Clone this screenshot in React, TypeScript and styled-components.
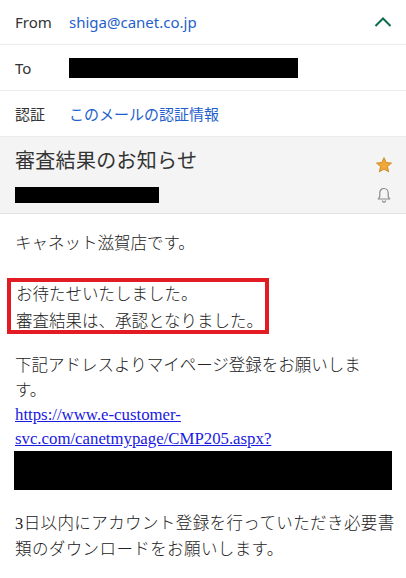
import styled, { createGlobalStyle } from "styled-components";

const GlobalStyle = createGlobalStyle`
  html, body {
    margin: 0;
    padding: 0;
    background: #ffffff;
  }
  body {
    font-family: "Noto Sans", "Noto Sans CJK JP", sans-serif;
    color: #222;
  }
`;

const Screen = styled.div`
  width: 406px;
  height: 578px;
  overflow: hidden;
  background: #fff;
`;

const HeaderRow = styled.div<{ $height: number }>`
  height: ${(p) => p.$height}px;
  display: flex;
  align-items: center;
  padding: 0 15px;
  border-bottom: 1px solid #ececec;
  box-sizing: border-box;
`;

const Label = styled.div`
  width: 54px;
  font-size: 15px;
  color: #333;
  flex-shrink: 0;
`;

const Value = styled.div`
  flex: 1;
  font-size: 15px;
  color: #1f5fcc;
  display: flex;
  align-items: center;
`;

const Redacted = styled.div<{ $w: number; $h: number }>`
  width: ${(p) => p.$w}px;
  height: ${(p) => p.$h}px;
  background: #000;
`;

const ChevronButton = styled.div`
  width: 20px;
  height: 20px;
  display: flex;
  align-items: center;
  justify-content: center;
  margin-right: -2px;
`;

const SubjectBar = styled.div`
  background: #f4f4f4;
  border-bottom: 1px solid #e2e2e2;
  height: 77px;
  box-sizing: border-box;
  padding: 11px 15px 0 15px;
  display: flex;
`;

const SubjectMain = styled.div`
  flex: 1;
  display: flex;
  flex-direction: column;
`;

const SubjectTitle = styled.div`
  font-size: 20px;
  line-height: 26px;
  color: #333;
  letter-spacing: 0.3px;
`;

const SubjectIcons = styled.div`
  width: 20px;
  display: flex;
  flex-direction: column;
  align-items: center;
  padding-top: 8px;
  gap: 13px;
  margin-right: -3px;
`;

const MailBody = styled.div`
  padding: 17px 14px 0 15px;
  font-family: "Liberation Serif", "Noto Sans CJK JP", serif;
  font-size: 16.5px;
  font-weight: 300;
  color: #222;
`;

const Para = styled.p<{ $lh?: number; $mb?: number; $ls?: number }>`
  margin: 0 0 ${(p) => p.$mb ?? 0}px 0;
  line-height: ${(p) => p.$lh ?? 26}px;
  letter-spacing: ${(p) => p.$ls ?? 0}px;
  white-space: nowrap;
`;

const Highlight = styled.div`
  margin: 0 0 19px -8px;
  width: 262px;
  height: 56px;
  box-sizing: border-box;
  border: 4px solid #e31b23;
  padding: 0 0 0 5px;
  line-height: 26.5px;
  white-space: nowrap;
`;

const MailLink = styled.a`
  display: block;
  color: #1a1ae0;
  text-decoration: underline;
  font-family: "Liberation Serif", serif;
  font-size: 16.8px;
  font-weight: 400;
  line-height: 24px;
  white-space: nowrap;
`;

const Chevron = () => (
  <svg width="18" height="12" viewBox="0 0 18 12">
    <polyline
      points="1.5,10 9,2.5 16.5,10"
      fill="none"
      stroke="#0d6b4f"
      strokeWidth="2"
    />
  </svg>
);

const Star = () => (
  <svg width="18" height="18" viewBox="0 0 24 24">
    <path
      d="M12 2.2l2.9 6.6 7.1.6-5.4 4.7 1.6 7-6.2-3.7-6.2 3.7 1.6-7L2 9.4l7.1-.6z"
      fill="#f2a73a"
      stroke="#c98419"
      strokeWidth="1.2"
      strokeLinejoin="round"
    />
  </svg>
);

const Bell = () => (
  <svg width="14" height="16" viewBox="0 0 14 16">
    <path
      d="M7 1.5c-2.6 0-4.2 2-4.2 4.6v3.6L1.3 12h11.4l-1.5-2.3V6.1C11.2 3.5 9.6 1.5 7 1.5z"
      fill="none"
      stroke="#8a8a8a"
      strokeWidth="1.2"
      strokeLinejoin="round"
    />
    <path d="M5.4 13.6a1.6 1.6 0 0 0 3.2 0" fill="none" stroke="#8a8a8a" strokeWidth="1.2" />
  </svg>
);

export default function App() {
  return (
    <Screen>
      <GlobalStyle />
      <HeaderRow $height={45}>
        <Label>From</Label>
        <Value>shiga@canet.co.jp</Value>
        <ChevronButton>
          <Chevron />
        </ChevronButton>
      </HeaderRow>
      <HeaderRow $height={46}>
        <Label>To</Label>
        <Value>
          <Redacted $w={229} $h={20} />
        </Value>
      </HeaderRow>
      <HeaderRow $height={46}>
        <Label>認証</Label>
        <Value>このメールの認証情報</Value>
      </HeaderRow>

      <SubjectBar>
        <SubjectMain>
          <SubjectTitle>審査結果のお知らせ</SubjectTitle>
          <Redacted $w={144} $h={16} style={{ marginTop: 13 }} />
        </SubjectMain>
        <SubjectIcons>
          <Star />
          <Bell />
        </SubjectIcons>
      </SubjectBar>

      <MailBody>
        <Para $mb={21}>キャネット滋賀店です。</Para>
        <Highlight>
          お待たせいたしました。
          <br />
          審査結果は、承認となりました。
        </Highlight>
        <Para $lh={25}>
          下記アドレスよりマイページ登録をお願いしま
          <br />
          す。
        </Para>
        <MailLink href="#">
          https://www.e-customer-
          <br />
          svc.com/canetmypage/CMP205.aspx?
        </MailLink>
        <Redacted $w={378} $h={39} style={{ marginLeft: -1, marginBottom: 21 }} />
        <Para $ls={0.4}>
          3日以内にアカウント登録を行っていただき必要書
          <br />
          類のダウンロードをお願いします。
        </Para>
      </MailBody>
    </Screen>
  );
}
